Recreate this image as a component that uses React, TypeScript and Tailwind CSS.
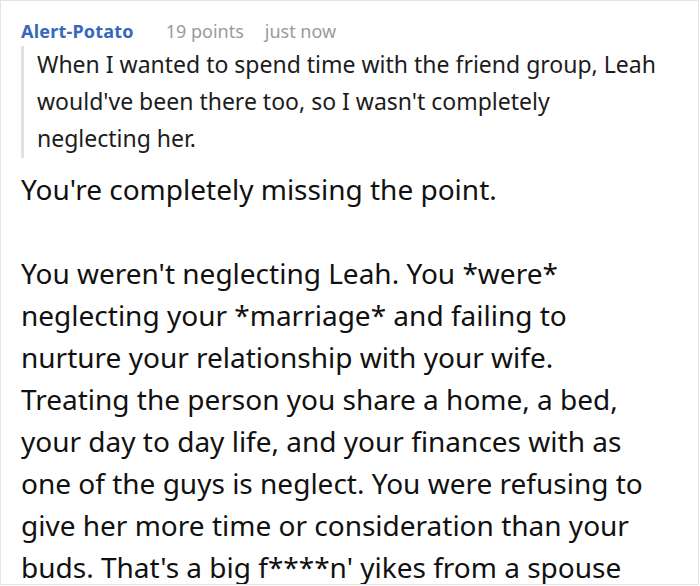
const body = [
  "You're completely missing the point.",
  "You weren't neglecting Leah. You *were* neglecting your *marriage* and failing to nurture your relationship with your wife. Treating the person you share a home, a bed, your day to day life, and your finances with as one of the guys is neglect. You were refusing to give her more time or consideration than your buds. That's a big f****n' yikes from a spouse",
];

export default function App() {
  return (
    <div className="h-[585px] w-[699px] overflow-hidden border border-[#e4e4e4] bg-white font-['Noto_Sans',sans-serif]">
      <div className="pl-[20px] pr-[39px] pt-[18px]">
        {/* comment header */}
        <div className="flex items-baseline text-[18px] leading-[24px]">
          <span className="font-bold tracking-[0.2px] text-[#3868b9]">Alert-Potato</span>
          <span className="ml-[32px] text-[#9a9a9a]">19 points</span>
          <span className="ml-[21px] text-[#9a9a9a]">just now</span>
        </div>

        {/* quoted text */}
        <blockquote className="mt-[3px] border-l-[3px] border-[#e2e2e2] pl-[13px] pb-[1px] text-[23px] leading-[37px] text-[#1c1c1c]">
          When I wanted to spend time with the friend group, Leah would've been there too, so I wasn't completely neglecting her.
        </blockquote>

        {/* reply body */}
        <div className="mt-[10px] text-[28px] leading-[42px] text-[#111]">
          {body.map((p, i) => (
            <p key={i} className={i > 0 ? "mt-[42px]" : ""}>
              {p}
            </p>
          ))}
        </div>
      </div>
    </div>
  );
}
